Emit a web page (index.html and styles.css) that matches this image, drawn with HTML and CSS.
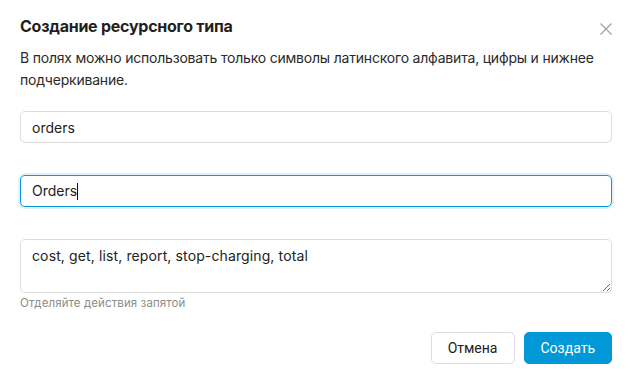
FILE: index.html
```html
<!DOCTYPE html>
<html lang="ru">
<head>
    <meta charset="UTF-8">
    <meta name="viewport" content="width=device-width, initial-scale=1.0">
    <title>Создание ресурсного типа</title>
    <link rel="stylesheet" href="styles.css">
</head>
<body>
    <div class="modal">
        <div class="modal-header">
            <h2>Создание ресурсного типа</h2>
            <button type="button" class="close" aria-label="Закрыть">
                <svg width="12" height="12" viewBox="0 0 12 12">
                    <path d="M0.5 0.5 L11.5 11.5 M11.5 0.5 L0.5 11.5" stroke="#a0a0a0" stroke-width="1.2" fill="none"/>
                </svg>
            </button>
        </div>
        <p class="description">В полях можно использовать только символы латинского алфавита, цифры и нижнее подчеркивание.</p>

        <div class="form-group">
            <input type="text" class="field" value="orders">
        </div>
        <div class="form-group">
            <div class="field focused">Orders<span class="caret"></span></div>
        </div>
        <div class="form-group last">
            <textarea class="field area">cost, get, list, report, stop-charging, total</textarea>
            <div class="hint">Отделяйте действия запятой</div>
        </div>

        <div class="modal-footer">
            <button type="button" class="btn btn-cancel">Отмена</button>
            <button type="button" class="btn btn-primary">Создать</button>
        </div>
    </div>
</body>
</html>
```

FILE: styles.css
```css
body {
    font-family: Inter, 'Noto Sans', sans-serif;
    margin: 0;
    padding: 0;
    background-color: #fff;
    color: #222;
}
.modal {
    padding: 16px 18px 0 20px;
}
.modal-header {
    display: flex;
    justify-content: space-between;
    align-items: center;
    height: 20px;
}
h2 {
    margin: 0;
    font-size: 16px;
    font-weight: 700;
    color: #1f1f1f;
    letter-spacing: -0.25px;
}
.close {
    border: none;
    background: none;
    padding: 0;
    margin-top: 6px;
    width: 12px;
    height: 12px;
    display: flex;
    cursor: pointer;
}
.description {
    margin: 11px 0 20px;
    font-size: 14px;
    line-height: 22px;
    color: #2a2a2a;
    letter-spacing: -0.2px;
}
.form-group {
    margin-bottom: 32px;
}
.form-group.last {
    margin-bottom: 0;
}
.field {
    box-sizing: border-box;
    display: block;
    width: 100%;
    height: 32px;
    padding: 0 11px;
    border: 1px solid #dcdcdc;
    border-radius: 5px;
    font-family: Inter, 'Noto Sans', sans-serif;
    font-size: 14px;
    line-height: 30px;
    color: #222;
    background: #fff;
    outline: none;
}
.focused {
    border-color: #0a98d8;
    box-shadow: 0 0 0 2px rgba(10, 152, 216, 0.12);
}
.caret {
    display: inline-block;
    width: 1px;
    height: 17px;
    background: #111;
    vertical-align: -4px;
}
.area {
    height: 54px;
    padding: 6px 11px;
    line-height: 20px;
    letter-spacing: 0.12px;
    resize: vertical;
}
.hint {
    margin-top: 3px;
    font-size: 11.5px;
    line-height: 14px;
    color: #8c8c8c;
    letter-spacing: 0.1px;
}
.modal-footer {
    display: flex;
    justify-content: flex-end;
    gap: 9px;
    margin-top: 22px;
}
.btn {
    height: 32px;
    padding: 0 16px;
    border-radius: 5px;
    font-family: Roboto, 'Liberation Sans', sans-serif;
    font-size: 14px;
    cursor: pointer;
}
.btn-cancel {
    background: #fff;
    border: 1px solid #dcdcdc;
    color: #222;
}
.btn-primary {
    background: #0098d6;
    border: 1px solid #0098d6;
    color: #fff;
}
```
